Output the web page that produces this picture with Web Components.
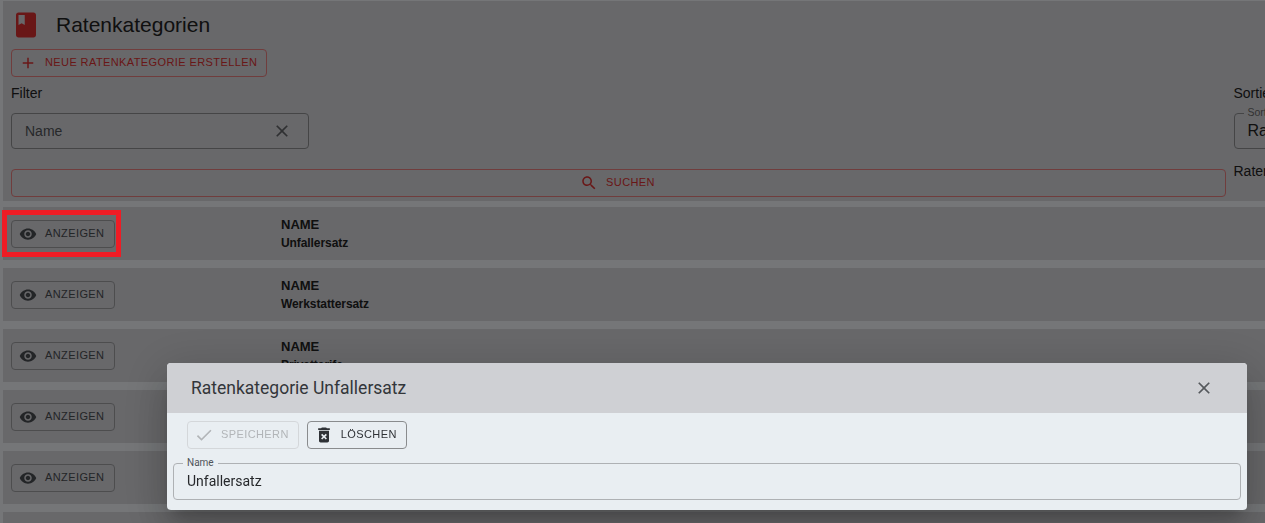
<!DOCTYPE html>
<html lang="de">
<head>
<meta charset="utf-8">
<title>Ratenkategorien</title>
<style>
  html, body { margin: 0; height: 100%; overflow: hidden; }
  body { background: #eaedf1; font-family: "Liberation Sans", Arial, sans-serif; color: #212121; }
</style>
</head>
<body>
<rate-page>
  <filter-panel slot="panel"></filter-panel>
  <rate-row name="Unfallersatz"></rate-row>
  <rate-row name="Werkstattersatz"></rate-row>
  <rate-row name="Privattarife"></rate-row>
  <rate-row></rate-row>
  <rate-row></rate-row>
  <rate-row></rate-row>
</rate-page>
<modal-dialog heading="Ratenkategorie Unfallersatz"></modal-dialog>
<mark-box></mark-box>

<script>
  (function rates(customElements) {
    const ICONS = {
      add: 'M19 13h-6v6h-2v-6H5v-2h6V5h2v6h6v2z',
      close: 'M19 6.41L17.59 5 12 10.59 6.41 5 5 6.41 10.59 12 5 17.59 6.41 19 12 13.41 17.59 19 19 17.59 13.41 12z',
      search: 'M15.5 14h-.79l-.28-.27C15.41 12.59 16 11.11 16 9.5 16 5.91 13.09 3 9.5 3S3 5.91 3 9.5 5.91 16 9.5 16c1.61 0 3.09-.59 4.23-1.57l.27.28v.79l5 4.99L20.49 19l-4.99-5zm-6 0C7.01 14 5 11.99 5 9.5S7.01 5 9.5 5 14 7.01 14 9.5 11.99 14 9.5 14z',
      eye: 'M12 4.5C7 4.5 2.73 7.61 1 12c1.73 4.39 6 7.5 11 7.5s9.27-3.11 11-7.5c-1.73-4.39-6-7.5-11-7.5zM12 17c-2.76 0-5-2.24-5-5s2.24-5 5-5 5 2.24 5 5-2.24 5-5 5zm0-8c-1.66 0-3 1.34-3 3s1.34 3 3 3 3-1.34 3-3-1.34-3-3-3z',
      check: 'M9 16.17L4.83 12l-1.42 1.41L9 19 21 7l-1.41-1.41z',
      trash: 'M6 19c0 1.1.9 2 2 2h8c1.1 0 2-.9 2-2V7H6v12zm2.46-7.12l1.41-1.41L12 12.59l2.12-2.12 1.41 1.41L13.41 14l2.12 2.12-1.41 1.41L12 15.41l-2.12 2.12-1.41-1.41L10.59 14l-2.13-2.12zM15.5 4l-1-1h-5l-1 1H5v2h14V4z',
      book: 'M18 2H6c-1.1 0-2 .9-2 2v16c0 1.1.9 2 2 2h12c1.1 0 2-.9 2-2V4c0-1.1-.9-2-2-2zM6 4h5v8l-2.5-1.5L6 12V4z'
    };
    const icon = (name, size) => `<svg width="${size}" height="${size}" viewBox="0 0 24 24" fill="currentColor"><path d="${ICONS[name]}"/></svg>`;

    class AppButton extends HTMLElement {
      constructor() {
        super();
        const shadowRoot = this.attachShadow({mode: 'open'});
        shadowRoot.innerHTML = `
          <style>
            :host {
              display: inline-flex;
              align-items: center;
              justify-content: center;
              box-sizing: border-box;
              height: 28px;
              padding: 0 var(--btn-right, 9px) 0 var(--btn-pad, 7px);
              gap: var(--btn-gap, 8px);
              border: 1px solid var(--btn-border, #9a9b9d);
              border-radius: 4px;
              color: var(--btn-color, #474a4f);
              font: 500 11px "Liberation Sans", Arial, sans-serif;
              letter-spacing: .4px;
              white-space: nowrap;
            }
            svg { display: block; flex: none; }
            span { display: block; margin-top: -2px; }
          </style>
          ${icon(this.getAttribute('icon'), this.getAttribute('size') || 18)}
          <span><slot></slot></span>
        `;
      }
    }
    customElements.define('app-button', AppButton);

    class OutlinedField extends HTMLElement {
      constructor() {
        super();
        const legend = this.getAttribute('legend');
        const shadowRoot = this.attachShadow({mode: 'open'});
        shadowRoot.innerHTML = `
          <style>
            :host {
              display: block;
              box-sizing: border-box;
              position: relative;
              height: var(--field-height, 36px);
              border: 1px solid var(--field-border, #8a8b8d);
              border-radius: 4px;
            }
            .body {
              box-sizing: border-box;
              height: 100%;
              display: flex;
              align-items: center;
              justify-content: space-between;
              padding: 0 var(--field-pad-right, 16px) var(--field-lift, 0) var(--field-pad, 13px);
              font-size: var(--field-font, 14px);
              color: var(--field-color, #4f5154);
            }
            .legend {
              position: absolute;
              left: 9px;
              top: -7px;
              padding: 0 4px;
              font-size: var(--legend-font, 10px);
              line-height: 11px;
              color: var(--legend-color, #666);
              background: var(--legend-bg, #d0d0d4);
              white-space: nowrap;
            }
            svg { display: block; color: #5f6164; }
          </style>
          ${legend ? `<span class="legend">${legend}</span>` : ''}
          <div class="body"><span><slot></slot></span>${this.hasAttribute('clearable') ? icon('close', 20) : ''}</div>
        `;
      }
    }
    customElements.define('outlined-field', OutlinedField);

    class FilterPanel extends HTMLElement {
      constructor() {
        super();
        const shadowRoot = this.attachShadow({mode: 'open'});
        shadowRoot.innerHTML = `
          <style>
            :host {
              display: block;
              box-sizing: border-box;
              height: 200px;
              margin: 1px 0 0 3px;
              padding: 8px 0 0 8px;
              background: #d0d0d4;
              font-size: 14px;
              --btn-border: #e07a7a;
              --btn-color: #d32f2f;
            }
            .title {
              display: flex;
              align-items: center;
              gap: 15px;
              height: 32px;
              margin-bottom: 8px;
              font-size: 21px;
            }
            .title svg { display: block; flex: none; color: #d32f2f; }
            .columns {
              display: flex;
              gap: 8px;
            }
            .main { width: 1215px; flex: none; }
            .side { width: 300px; flex: none; margin-left: -.5px; }
            .label { display: block; height: 16px; line-height: 16px; }
            .row-top { height: 28px; margin-bottom: 8px; }
            .filter { width: 298px; margin: 12px 0 20px; }
            .search { width: 100%; }
            .sort { width: 300px; margin: 12px 0 14px; --field-font: 16px; --field-color: #212121; --legend-font: 10.5px; }
          </style>
          <div class="title">${icon('book', 30)}<span>Ratenkategorien</span></div>
          <div class="row-top"><app-button icon="add" size="18">NEUE RATENKATEGORIE ERSTELLEN</app-button></div>
          <div class="columns">
            <div class="main">
              <span class="label">Filter</span>
              <outlined-field class="filter" clearable>Name</outlined-field>
              <app-button class="search" icon="search" size="18">SUCHEN</app-button>
            </div>
            <div class="side">
              <span class="label">Sortieren</span>
              <outlined-field class="sort" legend="Sortieren">Ratenkategorie</outlined-field>
              <span class="label">Ratenkategorien</span>
            </div>
          </div>
        `;
      }
    }
    customElements.define('filter-panel', FilterPanel);

    class RateRow extends HTMLElement {
      constructor() {
        super();
        const name = this.getAttribute('name');
        const shadowRoot = this.attachShadow({mode: 'open'});
        shadowRoot.innerHTML = `
          <style>
            :host {
              display: grid;
              grid-template-columns: 270px 1fr;
              align-items: start;
              justify-items: start;
              box-sizing: border-box;
              height: 53px;
              padding: 13px 0 0 8px;
              background: #d0d0d4;
              --btn-right: 10px;
            }
            .name { margin-top: -4px; font-weight: 700; }
            .name b { display: block; font-size: 13px; line-height: 18px; }
            .name span { display: block; font-size: 12px; letter-spacing: -.08px; line-height: 19px; }
          </style>
          <app-button icon="eye" size="18">ANZEIGEN</app-button>
          ${name ? `<div class="name"><b>NAME</b><span>${name}</span></div>` : ''}
        `;
      }
    }
    customElements.define('rate-row', RateRow);

    class RatePage extends HTMLElement {
      constructor() {
        super();
        const shadowRoot = this.attachShadow({mode: 'open'});
        shadowRoot.innerHTML = `
          <style>
            :host { display: block; }
            .rows {
              display: flex;
              flex-direction: column;
              gap: 8px;
              margin: 6px 0 0 3px;
            }
          </style>
          <slot name="panel"></slot>
          <div class="rows"><slot></slot></div>
        `;
      }
    }
    customElements.define('rate-page', RatePage);

    class ModalDialog extends HTMLElement {
      constructor() {
        super();
        const shadowRoot = this.attachShadow({mode: 'open'});
        shadowRoot.innerHTML = `
          <style>
            :host {
              position: fixed;
              inset: 0;
              display: flex;
              align-items: flex-end;
              padding: 0 18px 13px 167px;
              background: rgba(0, 0, 0, .5);
              font-family: Roboto, "Liberation Sans", sans-serif;
            }
            .dialog {
              flex: 1;
              height: 147px;
              border-radius: 4px;
              overflow: hidden;
              background: #e9eef2;
              box-shadow: 0 11px 15px -7px rgba(0,0,0,.2), 0 24px 38px 3px rgba(0,0,0,.14), 0 9px 46px 8px rgba(0,0,0,.12);
            }
            .head {
              display: flex;
              align-items: center;
              justify-content: space-between;
              height: 50px;
              padding: 0 33px 0 24px;
              background: #cfd0d4;
              font-size: 17.5px;
              color: #33363a;
            }
            .head svg { display: block; color: #55585c; }
            .tools {
              display: flex;
              gap: 8px;
              padding: 8px 0 14px 20px;
              --btn-pad: 6px;
              --btn-gap: 7px;
            }
            .off { --btn-border: #d4d7da; --btn-color: #b2b5b8; }
            .on { --btn-border: #8a8c8e; --btn-color: #2f3236; }
            .field {
              margin: 0 6px;
              --field-height: 37px;
              --field-border: #aeb1b4;
              --field-color: #26282b;
              --field-lift: 2px;
              --legend-bg: #e9eef2;
              --legend-color: #50545a;
            }
          </style>
          <div class="dialog">
            <div class="head"><span>${this.getAttribute('heading')}</span>${icon('close', 20)}</div>
            <div class="tools">
              <app-button class="off" icon="check" size="20">SPEICHERN</app-button>
              <app-button class="on" icon="trash" size="20">LÖSCHEN</app-button>
            </div>
            <outlined-field class="field" legend="Name">Unfallersatz</outlined-field>
          </div>
        `;
      }
    }
    customElements.define('modal-dialog', ModalDialog);

    // rote Markierung liegt ueber dem Dialog-Hintergrund
    class MarkBox extends HTMLElement {
      constructor() {
        super();
        const shadowRoot = this.attachShadow({mode: 'open'});
        shadowRoot.innerHTML = `
          <style>
            :host {
              position: fixed;
              left: 2px;
              top: 210px;
              width: 119px;
              height: 47px;
              box-sizing: border-box;
              border: 5px solid #ee1c25;
            }
          </style>
        `;
      }
    }
    customElements.define('mark-box', MarkBox);
  })(window.customElements);
</script>
</body>
</html>
